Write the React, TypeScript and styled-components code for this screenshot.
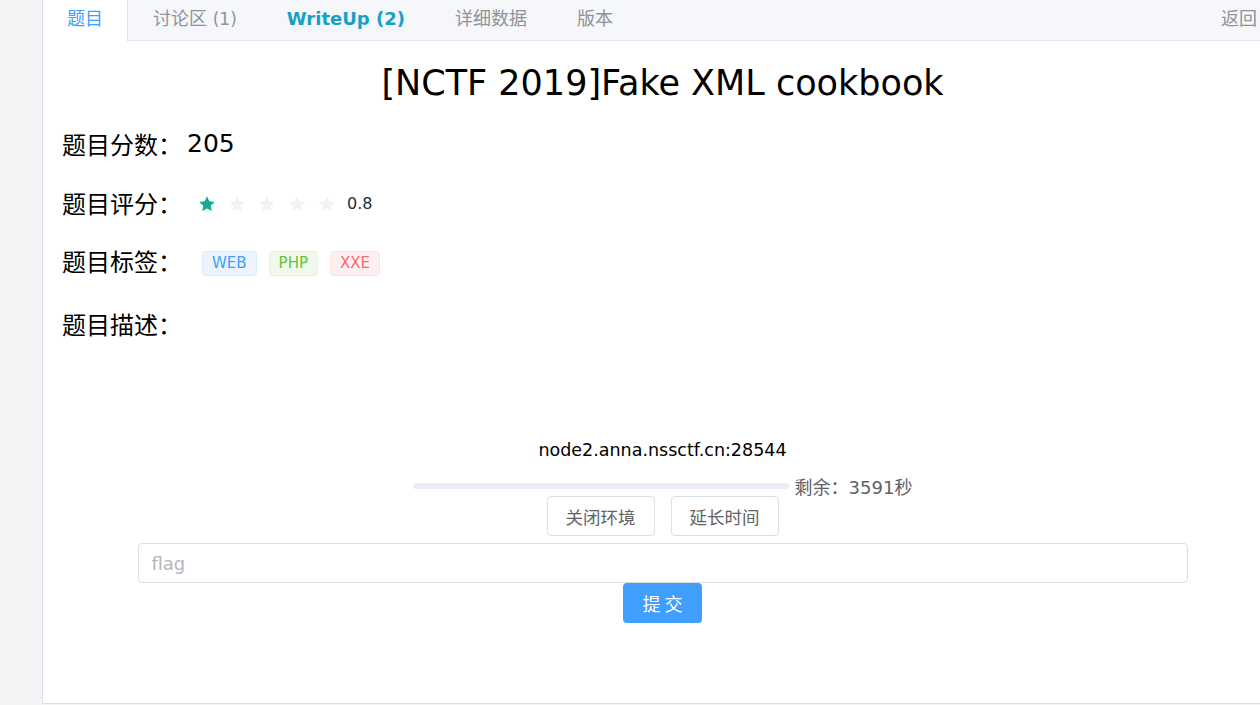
import React from "react";
import styled, { createGlobalStyle } from "styled-components";

const GlobalStyle = createGlobalStyle`
  html, body { margin: 0; padding: 0; }
  body {
    background: #f2f3f5;
    overflow: hidden;
    font-family: "DejaVu Sans", "Noto Sans CJK SC", sans-serif;
    color: #000;
  }
`;

const Page = styled.div`
  display: flex;
  width: 1260px;
  height: 705px;
  overflow: hidden;
`;

const Side = styled.div`
  width: 42px;
  flex-shrink: 0;
  background: #f2f3f5;
`;

const Card = styled.div`
  width: 1240px;
  height: 704px;
  flex-shrink: 0;
  box-sizing: border-box;
  background: #fff;
  border-left: 1px solid #dcdfe6;
  border-bottom: 1px solid #dcdfe6;
  display: flex;
  flex-direction: column;
`;

const TabBar = styled.div`
  display: flex;
  height: 41px;
  box-sizing: border-box;
  background: #f5f7fa;
  border-bottom: 1px solid #e4e7ed;
`;

const Tab = styled.div<{ $active?: boolean; $strong?: boolean; $right?: boolean }>`
  padding: 0 ${(p) => (p.$active ? "24px" : "25px")};
  height: ${(p) => (p.$active ? "41px" : "40px")};
  box-sizing: border-box;
  line-height: 38px;
  font-size: 18px;
  font-family: "DejaVu Sans", "Noto Sans CJK SC", sans-serif;
  color: ${(p) => (p.$active ? "#409eff" : p.$strong ? "#17a0c6" : "#909399")};
  font-weight: ${(p) => (p.$strong ? 700 : 400)};
  background: ${(p) => (p.$active ? "#fff" : "transparent")};
  border-right: ${(p) => (p.$active ? "1px solid #dcdfe6" : "none")};
  margin-left: ${(p) => (p.$right ? "auto" : "0")};
  white-space: nowrap;
`;

const TabSmall = styled.span`
  font-size: 17px;
`;

const Body = styled.div`
  display: flex;
  flex-direction: column;
`;

const Title = styled.h1`
  margin: 18px 0 0;
  text-align: center;
  font-weight: 400;
  font-size: 35px;
  line-height: 48px;
`;

const InfoRow = styled.div<{ $gap: number }>`
  display: flex;
  align-items: center;
  height: 40px;
  margin-top: ${(p) => p.$gap}px;
  padding-left: 19px;
  font-size: 24px;
`;

const Label = styled.span`
  font-family: "Noto Sans CJK SC", sans-serif;
  font-size: 24px;
`;

const Score = styled.span`
  font-size: 25px;
  margin-left: 5px;
`;

const Stars = styled.div`
  display: flex;
  align-items: center;
  margin-left: 16px;
  margin-top: 3px;
`;

const StarBox = styled.span`
  width: 30px;
  display: inline-flex;
  align-items: center;
`;

const RateText = styled.span`
  font-size: 16px;
  color: #1f2d3d;
  margin-left: -1px;
`;

const Tags = styled.div`
  display: flex;
  gap: 12px;
  margin-left: 20px;
  margin-top: 6px;
`;

const Tag = styled.span<{ $c: string; $bg: string; $bd: string }>`
  height: 25px;
  box-sizing: border-box;
  padding: 0 9px;
  line-height: 23px;
  font-size: 15px;
  border-radius: 4px;
  color: ${(p) => p.$c};
  background: ${(p) => p.$bg};
  border: 1px solid ${(p) => p.$bd};
`;

const Instance = styled.div`
  display: flex;
  flex-direction: column;
  align-items: center;
  margin-top: 95px;
`;

const Host = styled.div`
  font-size: 17.5px;
  line-height: 24px;
  color: #000;
`;

const ProgressRow = styled.div`
  display: flex;
  align-items: center;
  margin-top: 15px;
  height: 18px;
`;

const Track = styled.div`
  width: 376px;
  height: 6px;
  border-radius: 3px;
  background: #ebeef5;
  margin-right: 6px;
`;

const Remain = styled.span`
  font-size: 18px;
  color: #606266;
`;

const Buttons = styled.div`
  display: flex;
  gap: 16px;
  margin-top: 1px;
`;

const PlainButton = styled.button`
  height: 40px;
  padding: 0 18px;
  border: 1px solid #dcdfe6;
  border-radius: 4px;
  background: #fff;
  color: #606266;
  font-size: 17.5px;
  font-family: "Noto Sans CJK SC", sans-serif;
`;

const FlagInput = styled.input`
  width: 1050px;
  height: 40px;
  box-sizing: border-box;
  margin-top: 7px;
  padding: 0 13px;
  border: 1px solid #dcdfe6;
  border-radius: 4px;
  font-size: 18px;
  font-family: "DejaVu Sans", sans-serif;
  outline: none;
  &::placeholder { color: #b4b7bd; }
`;

const SubmitButton = styled.button`
  width: 79px;
  height: 40px;
  border: none;
  border-radius: 4px;
  background: #409eff;
  color: #fff;
  font-size: 18px;
  font-family: "Noto Sans CJK SC", sans-serif;
`;

const Star = ({ on }: { on: boolean }) => (
  <svg width="18" height="18" viewBox="0 0 24 24">
    <path
      d="M12 1.8l3.1 6.6 7.2.9-5.3 5 1.4 7.1L12 17.9l-6.4 3.5L7 14.3l-5.3-5 7.2-.9z"
      fill={on ? "#13ab98" : "#eff2f7"}
    />
  </svg>
);

export default function App() {
  return (
    <>
      <GlobalStyle />
      <Page>
        <Side />
        <Card>
          <TabBar>
            <Tab $active>题目</Tab>
            <Tab>讨论区 <TabSmall>(1)</TabSmall></Tab>
            <Tab $strong>WriteUp (2)</Tab>
            <Tab>详细数据</Tab>
            <Tab>版本</Tab>
            <Tab $right>返回</Tab>
          </TabBar>
          <Body>
            <Title>[NCTF 2019]Fake XML cookbook</Title>
            <InfoRow $gap={16}>
              <Label>题目分数：</Label>
              <Score>205</Score>
            </InfoRow>
            <InfoRow $gap={19}>
              <Label>题目评分：</Label>
              <Stars>
                {[0, 1, 2, 3, 4].map((i) => (
                  <StarBox key={i}>
                    <Star on={i === 0} />
                  </StarBox>
                ))}
                <RateText>0.8</RateText>
              </Stars>
            </InfoRow>
            <InfoRow $gap={18}>
              <Label>题目标签：</Label>
              <Tags>
                <Tag $c="#409eff" $bg="#ecf5ff" $bd="#d9ecff">WEB</Tag>
                <Tag $c="#67c23a" $bg="#f0f9eb" $bd="#e1f3d8">PHP</Tag>
                <Tag $c="#f56c6c" $bg="#fef0f0" $bd="#fde2e2">XXE</Tag>
              </Tags>
            </InfoRow>
            <InfoRow $gap={23}>
              <Label>题目描述：</Label>
            </InfoRow>
            <Instance>
              <Host>node2.anna.nssctf.cn:28544</Host>
              <ProgressRow>
                <Track />
                <Remain>剩余：3591秒</Remain>
              </ProgressRow>
              <Buttons>
                <PlainButton>关闭环境</PlainButton>
                <PlainButton>延长时间</PlainButton>
              </Buttons>
              <FlagInput placeholder="flag" />
              <SubmitButton>提 交</SubmitButton>
            </Instance>
          </Body>
        </Card>
      </Page>
    </>
  );
}
